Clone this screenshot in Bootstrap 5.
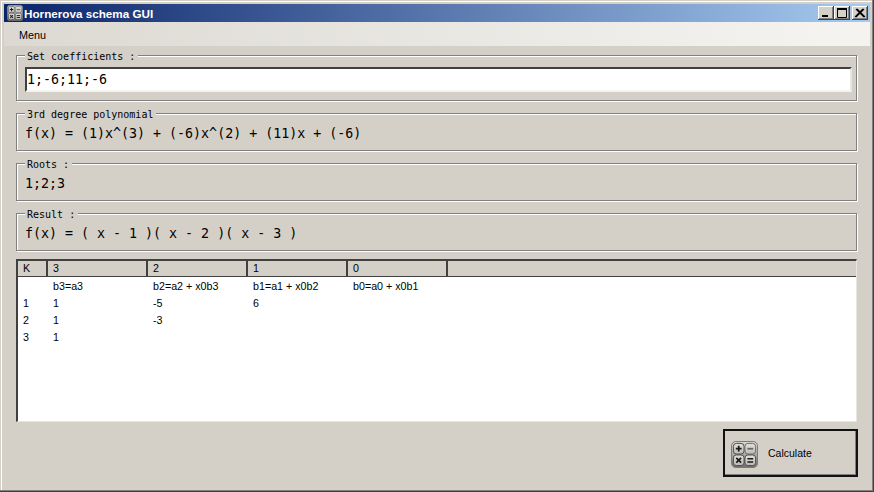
<!DOCTYPE html>
<html lang="en">
<head>
<meta charset="utf-8">
<title>Hornerova schema GUI</title>
<link rel="stylesheet" href="https://cdn.jsdelivr.net/npm/bootstrap@5.3.0/dist/css/bootstrap.min.css">
<style>
html,body{height:100%;overflow:hidden}
body{background:#d4d0c8;font-family:"Liberation Sans",Arial,sans-serif;font-size:11px;color:#000}
.win{width:874px;height:492px;padding:4px 4px 4px;box-shadow:inset -1px -1px 0 #404040,inset -2px -2px 0 #808080,inset 1px 1px 0 #d4d0c8,inset 2px 2px 0 #fff}
.tbar{height:18px;padding:0 2px 0 3px;background:linear-gradient(90deg,#0a246a,#a6caf0);color:#fff;font-weight:700;font-size:11.7px;line-height:19px;gap:1px}
.tbtn{width:16px;height:14px;background:#d4d0c8;box-shadow:inset -1px -1px 0 #404040,inset 1px 1px 0 #fff,inset -2px -2px 0 #808080;display:flex;padding:0}
.tbtn svg{display:block}
.tbtn-x{margin-left:2px}
.mstrip{height:24px;background:linear-gradient(90deg,#dcd9d2,#f4f3f0 95%);padding:0 0 0 15px;line-height:27px;font-size:10.8px;margin-bottom:9px}
.pane{padding:0 12px}
.gbox{position:relative;border:1px solid #808080;box-shadow:1px 1px 0 #fff,inset 1px 1px 0 #fff;margin-bottom:12px;height:38px;padding:10px 8px 0;width:841px;font-family:"DejaVu Sans Mono",monospace;font-size:13.3px;line-height:20px;white-space:pre}
.gbox-a{height:46px}
.gcap{position:absolute;top:-6px;left:8px;background:#d4d0c8;padding:0 3px 0 2px;font-size:10px;line-height:13px}
.field{height:25px;margin:1px -4px 0 0;background:#fff;border-top:2px solid #404040;border-left:2px solid #404040;border-right:2px solid #e8e6e1;border-bottom:2px solid #f4f3f0;padding:0;line-height:21px}
.grid-box{width:841px;height:163px;margin-top:-4px;background:#fff;border:2px solid #404040;border-right:1px solid #e8e6e1;border-bottom:1px solid #e8e6e1;overflow:hidden}
.htable{table-layout:fixed;width:100%;margin:0;font-size:10.7px;--bs-table-bg:transparent;--bs-table-color:#000;color:#000;border-collapse:separate;border-spacing:0}
.htable th{font-weight:400;background:#d4d0c8;height:16px;padding:0 0 0 5px;line-height:15px;border-right:2px solid #404040;border-bottom:1px solid #404040}
.htable th.fill{border-right:0}
.htable td{height:17px;padding:1px 0 0 5px;line-height:16px;border:0;white-space:nowrap}
.c0{width:30px}.cn{width:100px}
.foot{padding:7px 0 0 0}
.calc{width:135px;height:48px;border:2px solid #111;border-radius:0;background:#d4d0c8;box-shadow:inset -1px -1px 0 #808080;font-size:10.5px;padding:2px 0 0 6px;gap:10px;color:#000}
.calc:hover{background:#d4d0c8;border-color:#111;color:#000}
</style>
</head>
<body>
<svg width="0" height="0" class="position-absolute">
<defs>
<linearGradient id="gb" x1="0" y1="0" x2="0" y2="1"><stop offset="0" stop-color="#d8d8d4"/><stop offset=".55" stop-color="#a5a5a2"/><stop offset="1" stop-color="#6e6e6c"/></linearGradient>
<linearGradient id="gk" x1="0" y1="0" x2="0" y2="1"><stop offset="0" stop-color="#e2e0da"/><stop offset="1" stop-color="#bcbab4"/></linearGradient>
<symbol id="calc" viewBox="0 0 28 28">
<rect x=".5" y=".5" width="27" height="27" rx="4.5" fill="url(#gb)" stroke="#77777a"/>
<rect x="2.5" y="2.5" width="11" height="11" rx="3" fill="url(#gk)" stroke="#4a4a4a"/>
<rect x="14.5" y="2.5" width="11" height="11" rx="3" fill="url(#gk)" stroke="#6a6a6a"/>
<rect x="2.5" y="14.5" width="11" height="11" rx="3" fill="url(#gk)" stroke="#4a4a4a"/>
<rect x="14.5" y="14.5" width="11" height="11" rx="3" fill="url(#gk)" stroke="#4a4a4a"/>
<path d="M5 8h6M8 5v6" stroke="#1a1a1a" stroke-width="1.8"/>
<path d="M17 8h6" stroke="#666" stroke-width="1.8"/>
<path d="M5.5 17.5l5 5M10.5 17.5l-5 5" stroke="#1a1a1a" stroke-width="1.8"/>
<path d="M17 18.5h6M17 21.8h6" stroke="#1a1a1a" stroke-width="1.6"/>
</symbol>
</defs>
</svg>
<div class="win d-flex flex-column">
  <div class="tbar d-flex align-items-center">
    <svg width="16" height="16"><use href="#calc"/></svg>
    <span class="flex-grow-1">Hornerova schema GUI</span>
    <div class="d-flex">
      <div class="tbtn"><svg width="16" height="14"><rect x="4" y="9" width="6" height="2" fill="#000"/></svg></div>
      <div class="tbtn"><svg width="16" height="14"><path d="M3.5 2.5h9v9h-9z" fill="none" stroke="#000"/><rect x="3" y="2" width="10" height="2" fill="#000"/></svg></div>
      <div class="tbtn tbtn-x"><svg width="16" height="14"><path d="M4 3l8 8M12 3l-8 8M5 3l8 8M11 3l-8 8" stroke="#000" fill="none" stroke-width="1.1"/></svg></div>
    </div>
  </div>
  <div class="mstrip">Menu</div>
  <div class="pane flex-grow-1">
    <div class="gbox gbox-a"><span class="gcap">Set coefficients :</span><div class="field">1;-6;11;-6</div></div>
    <div class="gbox"><span class="gcap">3rd degree polynomial</span>f(x) = (1)x^(3) + (-6)x^(2) + (11)x + (-6)</div>
    <div class="gbox"><span class="gcap">Roots :</span>1;2;3</div>
    <div class="gbox"><span class="gcap">Result :</span>f(x) = ( x - 1 )( x - 2 )( x - 3 )</div>
    <div class="grid-box">
      <table class="table htable">
        <thead><tr><th class="c0">K</th><th class="cn">3</th><th class="cn">2</th><th class="cn">1</th><th class="cn">0</th><th class="fill"></th></tr></thead>
        <tbody>
          <tr><td></td><td>b3=a3</td><td>b2=a2 + x0b3</td><td>b1=a1 + x0b2</td><td>b0=a0 + x0b1</td><td></td></tr>
          <tr><td>1</td><td>1</td><td>-5</td><td>6</td><td></td><td></td></tr>
          <tr><td>2</td><td>1</td><td>-3</td><td></td><td></td><td></td></tr>
          <tr><td>3</td><td>1</td><td></td><td></td><td></td><td></td></tr>
        </tbody>
      </table>
    </div>
    <div class="foot d-flex justify-content-end">
      <button type="button" class="btn calc d-flex align-items-center"><svg width="27" height="27"><use href="#calc"/></svg><span>Calculate</span></button>
    </div>
  </div>
</div>
</body>
</html>
